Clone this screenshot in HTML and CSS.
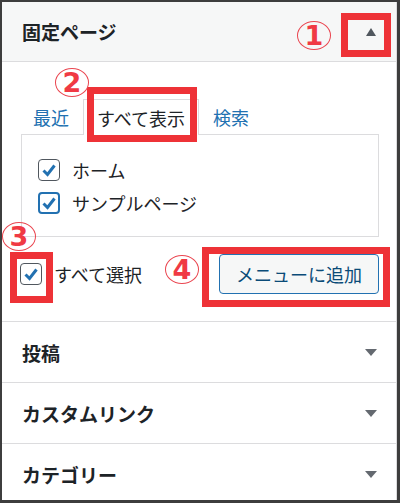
FILE: index.html
```html
<!DOCTYPE html>
<html lang="ja">
<head>
<meta charset="utf-8">
<link rel="stylesheet" href="styles.css">
</head>
<body>
<div class="frame">
  <div class="menu">
    <section class="box open">
      <div class="box-head">
        <h3>固定ページ</h3>
        <span class="tri up"></span>
      </div>
      <div class="box-body">
        <ul class="tabs">
          <li class="link">最近</li>
          <li class="active">すべて表示</li>
          <li class="link">検索</li>
        </ul>
        <div class="panel">
          <label class="item"><span class="cb"><svg viewBox="0 0 22 22" width="22" height="22"><polyline points="5.5,11.5 9.5,15.5 16.5,6.5" /></svg></span><span>ホーム</span></label>
          <label class="item"><span class="cb focus"><svg viewBox="0 0 22 22" width="22" height="22"><polyline points="5.5,11.5 9.5,15.5 16.5,6.5" /></svg></span><span>サンプルページ</span></label>
        </div>
        <div class="actions">
          <label class="item all"><span class="cb"><svg viewBox="0 0 22 22" width="22" height="22"><polyline points="5.5,11.5 9.5,15.5 16.5,6.5" /></svg></span><span>すべて選択</span></label>
          <button class="btn">メニューに追加</button>
        </div>
      </div>
    </section>
    <section class="box">
      <div class="box-head closed"><h3>投稿</h3><span class="tri down"></span></div>
    </section>
    <section class="box">
      <div class="box-head closed"><h3>カスタムリンク</h3><span class="tri down"></span></div>
    </section>
    <section class="box last">
      <div class="box-head closed"><h3>カテゴリー</h3><span class="tri down"></span></div>
    </section>
  </div>

  <span class="mark m1"></span>
  <span class="mark m2"></span>
  <span class="mark m3"></span>
  <span class="mark m4"></span>
  <span class="num n1">1</span>
  <span class="num n2">2</span>
  <span class="num n3">3</span>
  <span class="num n4">4</span>
</div>
</body>
</html>
```

FILE: styles.css
```css
* { box-sizing: border-box; }
html, body { margin: 0; padding: 0; background: #fff; }
body {
  font-family: "Noto Sans CJK JP", "Noto Sans", sans-serif;
  color: #1d2327;
}
.frame {
  position: relative;
  width: 400px;
  height: 503px;
  border: 2px solid #3d3d3d;
  border-right-width: 3px;
  border-bottom-width: 3px;
  background: #fff;
  overflow: hidden;
}
.menu {
  height: 100%;
  border-right: 1px solid #dcdcde;
}
.box { border-bottom: 1px solid #dcdcde; }
.box.last { border-bottom: none; }
.box-head {
  height: 60px;
  display: flex;
  align-items: center;
  justify-content: space-between;
  padding: 0 19px 0 20px;
}
.open .box-head {
  background: #f6f7f7;
  border-bottom: 1px solid #dcdcde;
}
.box-head h3 {
  margin: 0;
  font-size: 19px;
  font-weight: 700;
  color: #1d2327;
  line-height: 1;
}
.tri { width: 0; height: 0; display: block; }
.tri.up {
  border-left: 5.5px solid transparent;
  border-right: 5.5px solid transparent;
  border-bottom: 8px solid #50575e;
  margin-right: 1px;
}
.tri.down {
  border-left: 6px solid transparent;
  border-right: 6px solid transparent;
  border-top: 7px solid #646970;
}
.box-body {
  padding: 37px 17px 27px 19px;
  font-size: 18px;
  font-weight: 400;
}
.tabs {
  list-style: none;
  margin: 0 0 0 -2px;
  padding: 0;
  display: flex;
  position: relative;
  z-index: 1;
}
.tabs li {
  height: 35px;
  padding: 0 13px;
  border: 1px solid transparent;
  border-bottom: none;
  display: flex;
  align-items: center;
  line-height: 1;
}
.tabs li.link { color: #2271b1; }
.tabs li.active {
  border-color: #dcdcde;
  background: #fff;
  color: #1d2327;
  height: 36px;
  margin-bottom: -1px;
}
.panel {
  border: 1px solid #dcdcde;
  padding: 24px 16px 22px;
  display: flex;
  flex-direction: column;
  gap: 11px;
  background: #fff;
}
.item {
  display: flex;
  align-items: center;
  gap: 12px;
  height: 22px;
  line-height: 1;
  color: #1d2327;
}
.cb {
  width: 22px;
  height: 22px;
  border: 1px solid #50575e;
  border-radius: 4px;
  background: #fff;
  position: relative;
  flex: none;
}
.cb.focus {
  border: 2px solid #2271b1;
}
.cb svg {
  position: absolute;
  left: -1px;
  top: -1px;
}
.cb.focus svg { left: -2px; top: -2px; }
.cb polyline {
  fill: none;
  stroke: #2271b1;
  stroke-width: 3;
}
.actions {
  margin-top: 17px;
  display: flex;
  align-items: center;
  justify-content: space-between;
}
.item.all { margin-left: -1px; gap: 12px; }
.btn {
  width: 160px;
  height: 40px;
  border: 1px solid #2271b1;
  border-radius: 4px;
  background: #f6f7f7;
  color: #0a4b78;
  font-family: "Noto Sans CJK JP", "Noto Sans", sans-serif;
  font-size: 18px;
  font-weight: 400;
  padding: 0;
  line-height: 1;
}

/* annotations */
.mark {
  position: absolute;
  border: 7px solid #ee3237;
  z-index: 5;
}
.m1 { left: 339px; top: 11px; width: 50px; height: 44px; }
.m2 { left: 85px; top: 85px; width: 110px; height: 55px; }
.m3 { left: 8px; top: 250px; width: 43px; height: 51px; }
.m4 { left: 200px; top: 245px; width: 188px; height: 60px; }
.num {
  position: absolute;
  z-index: 6;
  width: 34px;
  height: 29px;
  border: 1.5px solid #ea4650;
  border-radius: 50%;
  display: flex;
  align-items: center;
  justify-content: center;
  font-family: "DejaVu Sans", "Liberation Sans", sans-serif;
  font-weight: 700;
  font-size: 27px;
  line-height: 1;
  color: #f03a44;
  background: transparent;
}
.n1 { left: 295px; top: 19px; }
.n2 { left: 53px; top: 66px; }
.n3 { left: 0px; top: 220px; }
.n4 { left: 163px; top: 253px; }
```
